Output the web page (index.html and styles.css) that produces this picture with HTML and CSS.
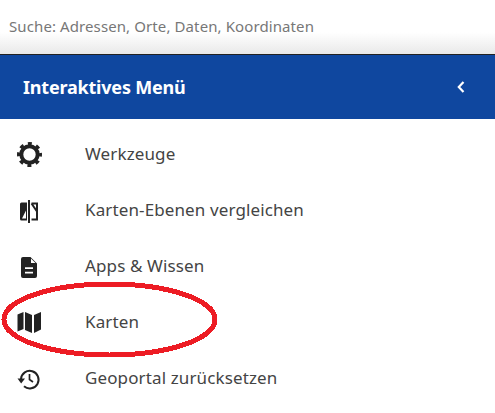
FILE: index.html
```html
<!DOCTYPE html>
<html lang="de">
<head>
    <meta charset="UTF-8">
    <title>Geoportal</title>
    <link rel="stylesheet" href="styles.css">
</head>
<body>
    <div class="search-bar">Suche: Adressen, Orte, Daten, Koordinaten</div>

    <div class="menu-header">
        <h1>Interaktives Menü</h1>
        <svg class="collapse-icon" viewBox="0 0 10 14" width="10" height="14"><path d="M7.5 2 L2.8 7 L7.5 12" fill="none" stroke="#fff" stroke-width="2.2"/></svg>
    </div>

    <ul class="menu-list">
        <li class="menu-item">
            <span class="menu-icon">
                <svg viewBox="0 0 28 28" width="28" height="28">
                    <circle class="line" cx="13.5" cy="14.5" r="8.2" stroke-width="4"/>
                    <circle class="line" cx="13.5" cy="14.5" r="11" stroke-width="3" stroke-dasharray="4 4.64" stroke-dashoffset="2"/>
                </svg>
            </span>
            Werkzeuge
        </li>
        <li class="menu-item">
            <span class="menu-icon">
                <svg viewBox="0 0 28 28" width="28" height="28">
                    <path fill-rule="evenodd" d="M5.5 6.5H11V24.5H5.5A1.5 1.5 0 0 1 4 23V8A1.5 1.5 0 0 1 5.5 6.5z M10 14.5L6 22.5H10z"/>
                    <rect x="12" y="4" width="2" height="23"/>
                    <path class="line" stroke-width="2" d="M15.5 7.5H21V23.5H15.5 M15.5 7.5L21 15.5"/>
                </svg>
            </span>
            Karten-Ebenen vergleichen
        </li>
        <li class="menu-item">
            <span class="menu-icon">
                <svg viewBox="0 0 28 28" width="28" height="28">
                    <path fill-rule="evenodd" d="M7 5H14.5L21 11.5V24A2 2 0 0 1 19 26H7A2 2 0 0 1 5 24V7A2 2 0 0 1 7 5z M15 6.5V11H19.5z M9 15.2V17H17V15.2z M9 19.8V21.6H17V19.8z"/>
                </svg>
            </span>
            Apps &amp; Wissen
        </li>
        <li class="menu-item">
            <span class="menu-icon">
                <svg viewBox="0 0 28 28" width="28" height="28">
                    <path d="M1.5 6.5L7.5 4V21L1.5 23.5z M9 4L16 7V25L9 22z M18 7L25 4V21.5L18 25z"/>
                </svg>
            </span>
            Karten
        </li>
        <li class="menu-item">
            <span class="menu-icon">
                <svg viewBox="0 0 28 28" width="28" height="28">
                    <path class="line" stroke-width="2" d="M5 15A8.8 8.8 0 1 1 8 22.3"/>
                    <path d="M1.5 14.5H9L5.2 19.5z"/>
                    <path class="line" stroke-width="1.7" d="M13.5 10V15.5L17 18"/>
                </svg>
            </span>
            Geoportal zurücksetzen
        </li>
    </ul>

    <svg class="highlight-ring" viewBox="0 0 220 80" width="220" height="80">
        <ellipse cx="109.5" cy="39.5" rx="105.5" ry="35.5" fill="none" stroke="#ed1c24" stroke-width="5"/>
    </svg>
</body>
</html>
```

FILE: styles.css
```css
* {
    margin: 0;
    padding: 0;
    box-sizing: border-box;
}

body {
    background-color: #fff;
    font-family: "Noto Sans", "Open Sans", sans-serif;
    position: relative;
    height: 413px;
    overflow: hidden;
}

.search-bar {
    height: 55px;
    padding: 16px 9px 0;
    font-size: 15px;
    letter-spacing: 0.1px;
    line-height: 20px;
    color: #777;
    border-bottom: 1px solid #222;
    background: linear-gradient(to bottom, #fff 60%, #e9e9e9 100%);
}

.menu-header {
    height: 64px;
    background-color: #0f479f;
    color: #fff;
    display: flex;
    align-items: center;
    justify-content: space-between;
    padding: 0 29px 0 23px;
}

.menu-header h1 {
    font-size: 18px;
    font-weight: 700;
    letter-spacing: -0.2px;
}

.menu-list {
    list-style: none;
    padding-top: 7px;
}

.menu-item {
    height: 56px;
    display: flex;
    align-items: center;
    font-size: 17px;
    letter-spacing: 0.12px;
    line-height: 24px;
    padding-bottom: 1px;
    color: #444;
}

.menu-icon {
    width: 85px;
    padding-left: 16px;
    display: flex;
    align-items: center;
    margin-bottom: -1px;
}

.menu-icon svg {
    fill: #222;
}

.menu-icon .line {
    fill: none;
    stroke: #222;
}

/* red hand-drawn marker round the Karten row */
.highlight-ring {
    position: absolute;
    left: 0;
    top: 280px;
    shape-rendering: crispEdges;
}
```
